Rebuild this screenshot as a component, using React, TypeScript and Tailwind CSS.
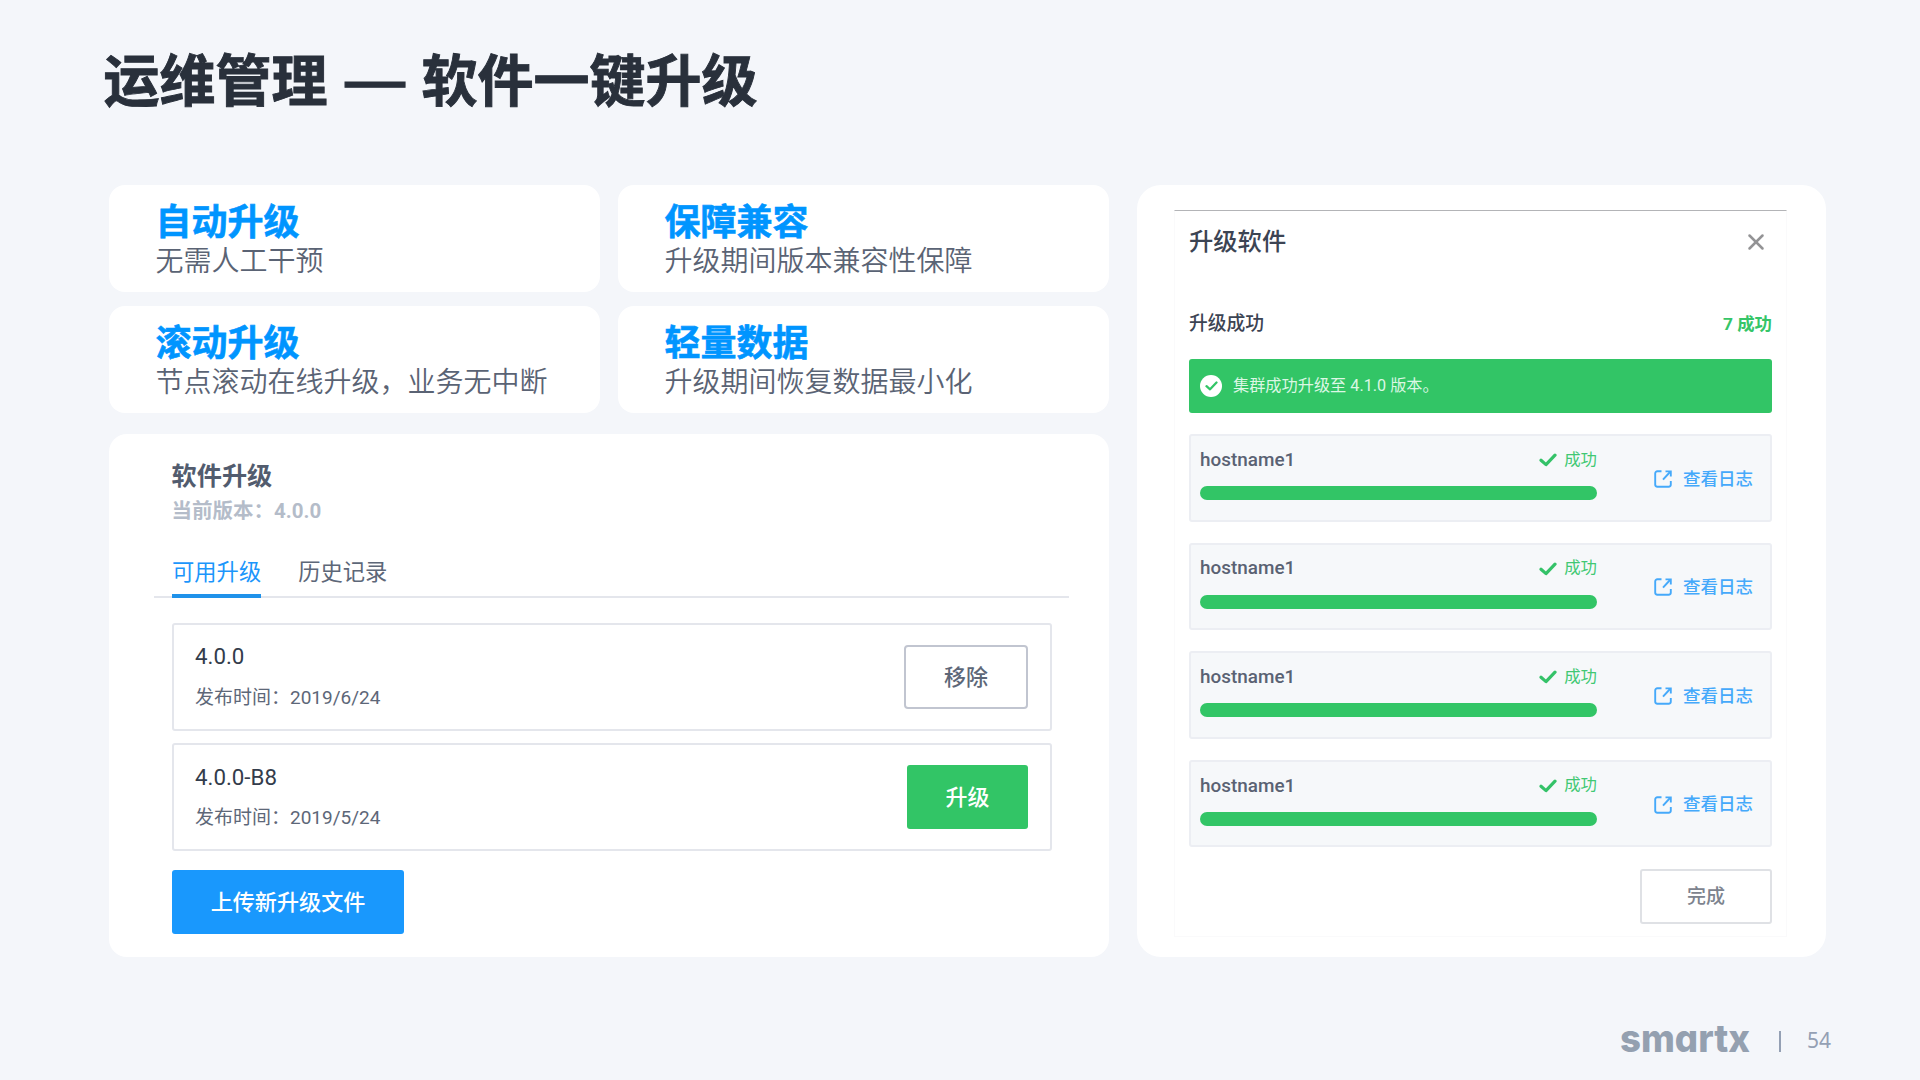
import { X } from "lucide-react";

const features = [
  { title: "自动升级", desc: "无需人工干预" },
  { title: "保障兼容", desc: "升级期间版本兼容性保障" },
  { title: "滚动升级", desc: "节点滚动在线升级，业务无中断" },
  { title: "轻量数据", desc: "升级期间恢复数据最小化" },
];

const hosts = ["hostname1", "hostname1", "hostname1", "hostname1"];

const CheckIcon = ({ className }: { className?: string }) => (
  <svg viewBox="0 0 18 14" fill="none" className={className}>
    <path d="M2 7.2 L7 11.6 L16 2.2" stroke="currentColor" strokeWidth="3.2" strokeLinecap="round" strokeLinejoin="round" />
  </svg>
);

const LogIcon = () => (
  <svg viewBox="0 0 18 18" fill="none" stroke="currentColor" strokeWidth="1.9" className="w-[18px] h-[18px]">
    <path d="M7.5 1.2 H3.4 A2.2 2.2 0 0 0 1.2 3.4 V14.6 A2.2 2.2 0 0 0 3.4 16.8 H14.6 A2.2 2.2 0 0 0 16.8 14.6 V11" />
    <path d="M9 9.6 L16 2" />
    <path d="M11.5 1.4 H16.8 V6.6" />
  </svg>
);

const FeatureCard = ({ title, desc }: { title: string; desc: string }) => (
  <div className="h-[107px] rounded-2xl bg-white pl-[46.5px] pt-[14px]">
    <h2 className="text-4xl leading-[40px] font-bold text-[#0095ff] [-webkit-text-stroke:0.6px_#0095ff]">{title}</h2>
    <p className="mt-px text-[28px] leading-[38px] font-[350] text-[#5a6374]">{desc}</p>
  </div>
);

const SoftwarePanel = () => (
  <section className="h-[523px] rounded-[18px] bg-white font-['Roboto','Noto_Sans_CJK_SC',sans-serif] pt-[25px]">
    <div className="pl-[62.5px]">
      <h3 className="text-[25.2px] leading-[36px] font-bold text-[#525c6e]">软件升级</h3>
      <p className="text-[20.5px] leading-[32px] font-bold text-[#b4bcc9]">当前版本：4.0.0</p>
    </div>
    <div className="mt-[26px] ml-[45px] flex h-[45px] w-[915px] gap-[37px] border-b-2 border-[#e4e6ec] pl-[18px] text-[22.3px] leading-[38px]">
      <div className="-mb-[2px] border-b-4 border-[#1f92ea] text-[#1c96fb]">可用升级</div>
      <div className="text-[#5d6778]">历史记录</div>
    </div>
    <div className="mt-[25px] ml-[63px] flex w-[880px] flex-col gap-3">
      <div className="flex h-[108px] items-center justify-between rounded-[3px] border-2 border-[#e4e6ec] pl-[21px] pr-[22px]">
        <div>
          <div className="text-[22.3px] leading-[40px] text-[#333c4b]">4.0.0</div>
          <div className="pt-px text-[19px] leading-[41px] text-[#5d6778]">发布时间：2019/6/24</div>
        </div>
        <button className="h-16 w-[124px] rounded-[4px] border-2 border-[#c1c5d0] text-[22px] font-medium text-[#5d6778]">移除</button>
      </div>
      <div className="flex h-[108px] items-center justify-between rounded-[3px] border-2 border-[#e4e6ec] pl-[21px] pr-[22px]">
        <div className="pt-[2px]">
          <div className="text-[22.3px] leading-[40px] text-[#333c4b]">4.0.0-B8</div>
          <div className="text-[19px] leading-[42px] text-[#5d6778]">发布时间：2019/5/24</div>
        </div>
        <button className="h-16 w-[121px] rounded-[3px] bg-[#32c566] text-[22px] font-medium text-white">升级</button>
      </div>
    </div>
    <button className="mt-[19px] ml-[63px] h-16 w-[232px] rounded-[3px] bg-[#1998fd] pt-[2px] text-[22.1px] font-medium text-white">上传新升级文件</button>
  </section>
);

const HostRow = ({ name }: { name: string }) => (
  <div className="flex h-[87.6px] justify-between rounded-[3px] border-2 border-[#eceef3] bg-[#f6f8fa] pl-[9px] pr-[17px]">
    <div className="w-[397px] pt-[9px]">
      <div className="flex h-[30px] items-center justify-between">
        <span className="text-[18.9px] font-medium text-[#5a6273]">{name}</span>
        <span className="flex items-center gap-[7px] text-[16.4px] text-[#41c873]">
          <CheckIcon className="h-[14px] w-[18px] text-[#34c268]" />
          成功
        </span>
      </div>
      <div className="mt-[11px] h-[14px] rounded-full bg-[#32c566]" />
    </div>
    <div className="flex items-center gap-[11px] pt-[2px] text-[17.5px] font-medium text-[#45a9fa]">
      <LogIcon />
      查看日志
    </div>
  </div>
);

const UpgradeDialog = () => (
  <section className="h-[772px] w-[689px] rounded-[24px] bg-white pl-[37px] pt-[25px] font-['Roboto','Noto_Sans_CJK_SC',sans-serif]">
    <div className="h-[727px] w-[613px] border border-[#fafafb] border-t-[#b3b4b7] px-[14px]">
      <div className="flex h-[62px] items-center justify-between pr-[3px]">
        <h3 className="text-[24.3px] font-medium text-[#3c4453]">升级软件</h3>
        <X className="h-[28px] w-[26px] text-[#939395]" strokeWidth={2.3} />
      </div>
      <div className="mt-[34px] flex h-[34px] items-center justify-between">
        <h4 className="text-[18.8px] font-medium text-[#3c4453]">升级成功</h4>
        <span className="pt-px text-[17.4px] font-bold text-[#35c568]">7 成功</span>
      </div>
      <div className="mt-[18px] flex h-[54px] items-center gap-[11px] rounded-[3px] bg-[#32c566] pl-[11px] text-[16.2px] text-[#dcf7e4]">
        <div className="flex h-[22px] w-[22px] items-center justify-center rounded-full bg-white">
          <CheckIcon className="h-[10px] w-[13px] text-[#32c566]" />
        </div>
        集群成功升级至 4.1.0 版本。
      </div>
      <div className="mt-[21px] flex flex-col gap-[21px]">
        {hosts.map((host, index) => (
          <HostRow key={index} name={host} />
        ))}
      </div>
      <div className="mt-[21.5px] flex justify-end">
        <button className="h-[55px] w-[132px] rounded-[3px] border-2 border-[#dfe1e5] pt-[2px] text-[19px] font-medium text-[#7d838e]">完成</button>
      </div>
    </div>
  </section>
);

const App = () => {
  return (
    <div className="flex h-[1080px] w-[1920px] flex-col overflow-hidden bg-[#f4f6fa] font-['Noto_Sans_CJK_SC',sans-serif]">
      <h1 className="flex h-[185px] pt-[37px] pl-[103.5px] text-[56px] leading-[80px] font-bold whitespace-pre text-[#29303b] [-webkit-text-stroke:0.9px_#29303b]">
        <span>运维管理</span>
        <span className="w-[94px] scale-x-[1.32] text-center">—</span>
        <span>软件一键升级</span>
      </h1>

      <main className="flex gap-7 pl-[109px]">
        <div className="w-[1000px]">
          <div className="mb-[21px] grid grid-cols-2 gap-x-[18px] gap-y-[14px]">
            {features.map((feature) => (
              <FeatureCard key={feature.title} title={feature.title} desc={feature.desc} />
            ))}
          </div>
          <SoftwarePanel />
        </div>
        <UpgradeDialog />
      </main>

      {/* Footer with brand and page number */}
      <footer className="mt-[61px] flex h-[46px] items-center justify-end pr-[89px] text-[21px] text-[#94a0b4]">
        <svg viewBox="0 0 134 48" className="h-12 w-[134px] overflow-visible">
          <text x="2" y="34.5" textLength="130" lengthAdjust="spacingAndGlyphs" className="fill-[#94a0b0] font-['Inter'] text-[38px] font-extrabold [font-feature-settings:'cv11']">smartx</text>
        </svg>
        <span className="ml-[27px] h-[21px] w-[2px] bg-[#94a0b4]" />
        <span className="ml-[26px] font-['Noto_Sans']">54</span>
      </footer>
    </div>
  );
};

export default App;
